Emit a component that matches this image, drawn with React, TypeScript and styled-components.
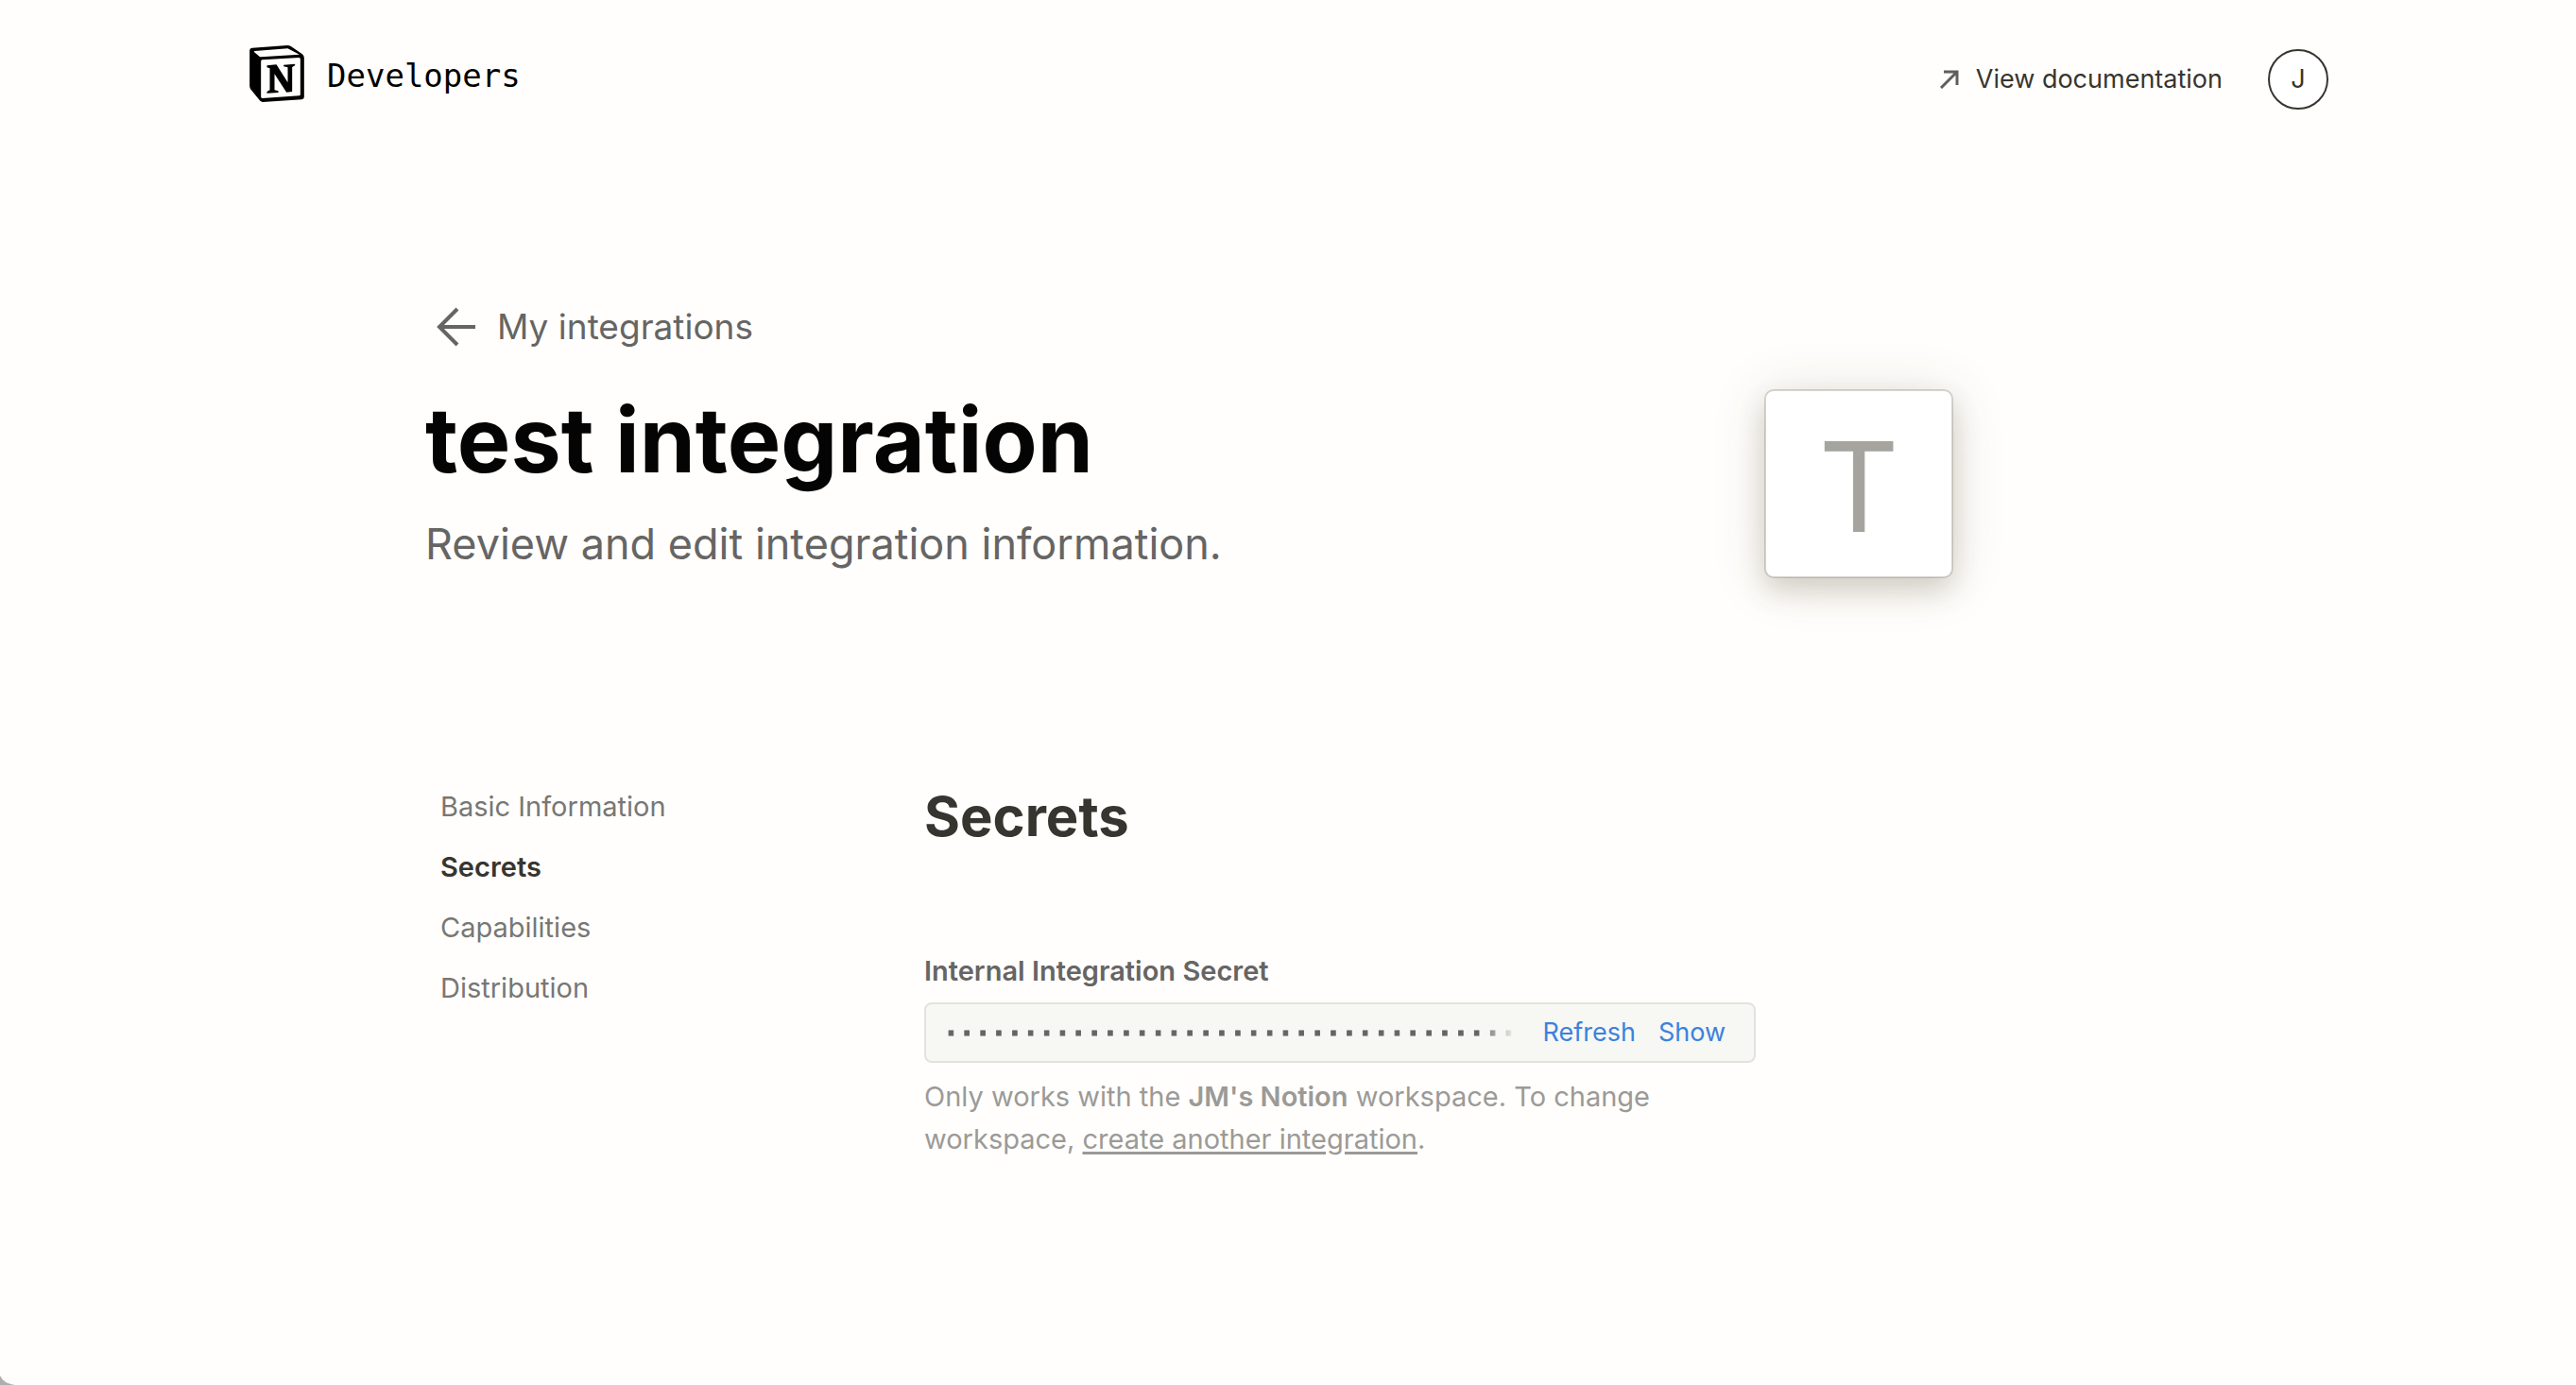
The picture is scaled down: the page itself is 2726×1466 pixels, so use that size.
import React from "react";
import styled, { createGlobalStyle } from "styled-components";

const sans = `Inter, "Liberation Sans", Arial, sans-serif`;

const GlobalStyle = createGlobalStyle`
  *, *::before, *::after { box-sizing: border-box; }
  body {
    margin: 0;
    background: #fffefc;
    color: #37352f;
    font-family: ${sans};
    font-size: 29px;
    line-height: 40px;
  }
  a { color: inherit; text-decoration: none; }
  h1, h2, p { margin: 0; }
`;

const Page = styled.div`
  min-height: 100vh;
  padding: 0 64px 0 66px;
`;

const Header = styled.header`
  display: flex;
  align-items: flex-start;
  justify-content: space-between;
  max-width: 2200px;
  margin: 0 auto;
  padding-top: 48px;
`;

const Brand = styled.a`
  display: flex;
  align-items: center;
  gap: 24px;
  color: #000;
  font-family: "DejaVu Sans Mono", monospace;
  font-size: 34px;
`;

const BrandName = styled.span`
  padding-top: 4px;
`;

const HeaderActions = styled.div`
  display: flex;
  align-items: center;
  gap: 48px;
  padding-top: 4px;
  font-size: 27px;
`;

const DocsLink = styled.a`
  display: flex;
  align-items: center;
  gap: 18px;
`;

const Avatar = styled.button`
  width: 64px;
  height: 64px;
  padding: 0;
  border: 2px solid #37352f;
  border-radius: 50%;
  background: #fff;
  color: inherit;
  font: inherit;
`;

const Main = styled.main`
  max-width: 1828px;
  margin: 0 auto;
  padding: 200px 0 64px;
`;

const Hero = styled.section`
  display: grid;
  grid-template-columns: minmax(0, 1fr) 200px;
  align-items: end;
  max-width: 1617px;
`;

const BackLink = styled.a`
  display: flex;
  align-items: center;
  gap: 23px;
  padding-left: 12px;
  color: #666564;
  font-size: 37px;
  line-height: 60px;
`;

const Title = styled.h1`
  color: #040404;
  font-size: 95px;
  line-height: 120px;
  font-weight: 700;
  padding: 30px 0 18px;
`;

const Subtitle = styled.p`
  padding-bottom: 4px;
  color: #666564;
  font-size: 45px;
  line-height: 64px;
`;

const Tile = styled.div`
  display: grid;
  place-items: center;
  height: 200px;
  padding-top: 6px;
  border: 2px solid rgba(55, 53, 47, 0.2);
  border-radius: 10px;
  background: #fff;
  background-clip: padding-box;
  box-shadow: 0 14px 28px rgba(80, 70, 40, 0.18), 0 4px 56px rgba(80, 70, 40, 0.15);
  color: #a5a49f;
  font-size: 132px;
  line-height: 1;
`;

const Body = styled.div`
  display: grid;
  grid-template-columns: 528px minmax(0, 880px);
  margin-top: 216px;
`;

const Nav = styled.nav`
  display: flex;
  flex-direction: column;
  gap: 24px;
  padding: 6px 0 0 16px;
`;

const NavLink = styled.a<{ $active?: boolean }>`
  color: ${(p) => (p.$active ? "#37352f" : "#787774")};
  font-weight: ${(p) => (p.$active ? 600 : 400)};
`;

const Heading = styled.h2`
  font-size: 58px;
  line-height: 72px;
  font-weight: 700;
`;

const Field = styled.div`
  margin-top: 108px;
`;

const Label = styled.label`
  display: block;
  color: #666564;
  font-weight: 600;
`;

const SecretBox = styled.div`
  display: flex;
  align-items: center;
  gap: 24px;
  height: 64px;
  margin-top: 13px;
  padding: 0 30px 0 18px;
  border: 2px solid #e2e2df;
  border-radius: 8px;
  background: #f7f7f4;
`;

const SecretInput = styled.input`
  flex: 1;
  min-width: 0;
  padding: 2px 0 0;
  border: 0;
  outline: 0;
  background: transparent;
  color: #666564;
  font-family: "DejaVu Sans Mono", monospace;
  font-size: 28px;
  font-weight: 700;
  line-height: 40px;
  -webkit-text-stroke: 1px #666564;
  mask-image: linear-gradient(to right, #000 calc(100% - 44px), transparent calc(100% - 4px));
`;

const TextButton = styled.button`
  padding: 0;
  border: 0;
  background: none;
  color: #3c82dc;
  font: inherit;
  font-size: 27px;
`;

const Help = styled.p`
  max-width: 800px;
  margin-top: 13px;
  color: #9b9a97;
  line-height: 45px;

  strong { font-weight: 600; }
  a { text-decoration: underline; text-decoration-thickness: 3px; text-underline-offset: 3px; }
`;

const Corner = styled.svg`
  position: fixed;
  left: 0;
  bottom: 0;
`;

const links = ["Basic Information", "Secrets", "Capabilities", "Distribution"];

const Logo = () => (
  <svg width="58" height="60" viewBox="0 0 173 180" aria-hidden="true">
    <path d="M8 8 120 0Q126 0 131 3L167 28Q173 32 173 40V164Q173 171 165 172L42 180Q36 180 32 175L4 140Q0 135 0 129V16Q0 9 8 8Z" />
    <path fill="#fffefc" d="M16 18 121 10 158 29 36 37Q33 37 31 35L15 22Q12 19 16 18ZM40 46 157 39Q161 39 161 44V156Q161 160 157 160L40 168Q36 168 36 163V51Q36 46 40 46Z" />
    <path d="M55 64 85 61 121 118V70L108 67V62L144 59V64L135 69V147L117 149 79 91V142L91 145V150L55 152V147L64 142V73L55 70Z" />
  </svg>
);

const App = () => (
  <Page>
    <GlobalStyle />
    <Header>
      <Brand href="#">
        <Logo />
        <BrandName>Developers</BrandName>
      </Brand>
      <HeaderActions>
        <DocsLink href="#">
          <svg width="20" height="20" viewBox="0 0 20 20" fill="none" stroke="#5f5e5a" strokeWidth="3" aria-hidden="true">
            <path d="M1 19 18 2M4 2H18V16" />
          </svg>
          View documentation
        </DocsLink>
        <Avatar aria-label="Account">J</Avatar>
      </HeaderActions>
    </Header>
    <Main>
      <Hero>
        <div>
          <BackLink href="#">
            <svg width="41" height="42" viewBox="0 0 41 42" fill="none" stroke="currentColor" strokeWidth="4" aria-hidden="true">
              <path d="M41 21H3M22 2 3 21 22 40" />
            </svg>
            My integrations
          </BackLink>
          <Title>test integration</Title>
          <Subtitle>Review and edit integration information.</Subtitle>
        </div>
        <Tile>T</Tile>
      </Hero>
      <Body>
        <Nav>
          {links.map((name) => (
            <NavLink key={name} href="#" $active={name === "Secrets"}>
              {name}
            </NavLink>
          ))}
        </Nav>
        <section>
          <Heading>Secrets</Heading>
          <Field>
            <Label htmlFor="secret">Internal Integration Secret</Label>
            <SecretBox>
              <SecretInput id="secret" readOnly value={"·".repeat(36)} />
              <TextButton>Refresh</TextButton>
              <TextButton>Show</TextButton>
            </SecretBox>
            <Help>
              Only works with the <strong>JM's Notion</strong> workspace. To change workspace,{" "}
              <a href="#">create another integration</a>.
            </Help>
          </Field>
        </section>
      </Body>
    </Main>
    <Corner width="16" height="10" viewBox="0 0 16 10" aria-hidden="true">
      <path d="M0 0C3 6 8 9 16 10H0Z" fill="#aeaeae" />
    </Corner>
  </Page>
);

export default App;
